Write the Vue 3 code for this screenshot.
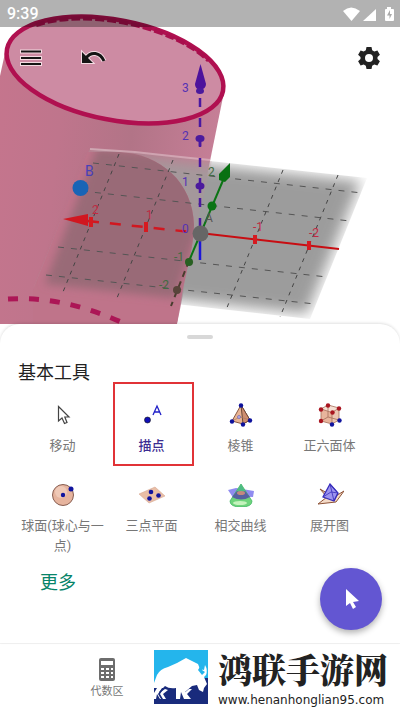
<script setup>
import { ref } from 'vue'

const tools = [
  { id: 'move', label: '移动' },
  { id: 'point', label: '描点' },
  { id: 'pyramid', label: '棱锥' },
  { id: 'cube', label: '正六面体' },
  { id: 'sphere', label: '球面(球心与一点)' },
  { id: 'plane', label: '三点平面' },
  { id: 'intersect', label: '相交曲线' },
  { id: 'net', label: '展开图' }
]
const selected = ref('point')
</script>

<template>
  <main class="app">
    <section class="view">
      <svg class="scene" viewBox="0 0 400 324" preserveAspectRatio="xMinYMin slice" aria-hidden="true">
        <defs>
          <linearGradient id="body" x1="0" y1="0" x2="1" y2="0.15">
            <stop offset="0" stop-color="#c5758d" />
            <stop offset="0.3" stop-color="#bf758c" />
            <stop offset="0.62" stop-color="#b27487" />
            <stop offset="1" stop-color="#c67f97" />
          </linearGradient>
          <filter id="soft" x="-10%" y="-10%" width="120%" height="120%">
            <feGaussianBlur stdDeviation="7" />
          </filter>
          <filter id="slight" x="-10%" y="-10%" width="120%" height="120%">
            <feGaussianBlur stdDeviation="4" />
          </filter>
          <clipPath id="sheetClip"><path d="M90 148L367 178L310 319L33 288Z" /></clipPath>
          <clipPath id="insideClip"><path d="M60 152H120C160 154 193 182 194 225C194 250 184 275 177 324H30V152Z" /></clipPath>
        </defs>
        <rect width="400" height="324" fill="#fff" />
        <path d="M0 76L5 53L224 92L177 324H0Z" fill="url(#body)" />
        <g clip-path="url(#sheetClip)">
          <path d="M92 152L361 181L307 314L40 284Z" fill="#9c9c9c" filter="url(#soft)" />
          <path d="M90 148L212 161L177 305L33 288Z" fill="#c98b9c" opacity="0.2" />
        </g>
        <g clip-path="url(#insideClip)">
          <path d="M90 146L220 160L177 324L33 324V290Z" fill="#bf748a" />
          <path d="M97 148L220 160L175 298L45 284Z" fill="#996a77" filter="url(#slight)" />
        </g>
        <path d="M90 149L135 152Q170 156 210 160" fill="none" stroke="#e0c2ca" stroke-width="2" opacity="0.6" />
        <g stroke="#555" stroke-width="1" stroke-dasharray="6 7" fill="none">
          <path d="M93 163L362 193" />
          <path d="M82 191L350 221" />
          <path d="M58 247L327 277" />
          <path d="M46 275L315 304" />
        </g>
        <g stroke="#444" stroke-width="1" stroke-dasharray="4 5" fill="none">
          <path d="M119 154L63 292" />
          <path d="M173 160L117 298" />
          <path d="M283 170L226 310" />
          <path d="M338 175L280 317" />
        </g>
        <g transform="translate(115 70) rotate(11)">
          <ellipse rx="110" ry="50" fill="#cd8ba3" stroke="#b01050" stroke-width="4.500" />
          <path d="M-86 -29A108 48 0 0 1 90 -27" fill="none" stroke="#a80f4d" stroke-width="4" stroke-dasharray="9 3" />
        </g>
        <path d="M8 299C45 297 80 304 121 322" fill="none" stroke="#ac1656" stroke-width="5" stroke-dasharray="10 11" />

        <path d="M88 221L200 233" stroke="#d11720" stroke-width="2.500" stroke-dasharray="11 11" />
        <path d="M200 233L339 249" stroke="#c80d12" stroke-width="2" />
        <path d="M63 219L88 214V226Z" fill="#d11720" />
        <path d="M91 217V227M146 222V232M255 235V244M309 241V250" stroke="#d61a20" stroke-width="4" />
        <path d="M200 98V230" stroke="#4a18a0" stroke-width="2.500" stroke-dasharray="9 11" />
        <path d="M200 139V146M200 186V193" stroke="#4a18a0" stroke-width="2.500" />
        <path d="M200.500 64L206 84Q206 89 200 90Q195 89 195 84Z" fill="#4d129c" />
        <g fill="#4b1a9d">
          <ellipse cx="200" cy="91" rx="4" ry="3" /><ellipse cx="200" cy="138.500" rx="4.500" ry="3.500" /><ellipse cx="200" cy="186" rx="4.500" ry="3.500" />
        </g>
        <path d="M200 236V260" stroke="#1c16d8" stroke-width="2.500" />
        <path d="M189 261L224 178" stroke="#0b7414" stroke-width="2" />
        <path d="M189 261L171 306" stroke="#493d2e" stroke-width="2" stroke-dasharray="6 5" />
        <path d="M230 163L219 174V180L225 182L230 177Z" fill="#087012" />
        <circle cx="212" cy="206" r="4.500" fill="#0b7414" />
        <circle cx="189" cy="262" r="4" fill="#286021" />
        <circle cx="177" cy="290" r="4" fill="#58443a" />
        <circle cx="200.500" cy="233.500" r="8" fill="#666" />
        <circle cx="80.500" cy="188" r="8" fill="#1864b6" />
        <g class="ticks">
          <g fill="#5532b4"><text x="182" y="92">3</text><text x="182" y="140">2</text><text x="182" y="186">1</text><text x="182" y="233">0</text></g>
          <g fill="#c02a43"><text x="92" y="214">2</text><text x="146" y="219">1</text><text x="253" y="231">-1</text><text x="309" y="237">-2</text></g>
          <g fill="#436b43"><text x="208" y="176">2</text><text x="174" y="261">-1</text><text x="159" y="289">-2</text></g>
          <text class="point-name" x="85" y="176" fill="#4840b8">B</text>
          <text x="205" y="222" fill="#555">A</text>
        </g>
      </svg>

      <div class="chrome">
        <header class="status">
          <span>9:39</span>
          <svg class="signals" viewBox="0 0 52 18" fill="#fff" aria-hidden="true">
            <path d="M1 6Q9 -1 18 6L9.500 16Z" />
            <path d="M34 4V16H21Z" />
            <path d="M45 2H49V4H51Q52 4 52 5V15Q52 16 51 16H44Q43 16 43 15V5Q43 4 44 4H45Z" />
            <path d="M48 5L45 10.500H47.500V14L50 9H48Z" fill="#aaa" />
          </svg>
        </header>
        <nav class="toolbar" aria-label="视图">
          <button class="icon-button" aria-label="菜单">
            <svg viewBox="0 0 24 24"><path d="M1 5.500H23M1 12H23M1 18H23" stroke="#f4dbe2" stroke-width="4" /><path d="M2 5.500H22M2 12H22M2 18H22" stroke="#151515" stroke-width="2" /></svg>
          </button>
          <button class="icon-button undo" aria-label="撤销">
            <svg viewBox="0 0 28 24"><g fill="none" stroke="#f4dbe2" stroke-width="5"><path d="M7 12C12 5 21 6 25 15" /><path d="M3 6V17H14Z" stroke-width="2" /></g><path d="M7 12C12 5 21 6 25 15" fill="none" stroke="#151515" stroke-width="3" /><path d="M3 6V17H14Z" fill="#151515" /></svg>
          </button>
          <button class="icon-button settings" aria-label="设置">
            <svg viewBox="0 0 24 24"><path fill="#222" fill-rule="evenodd" d="M9.500 1H14.500L15.200 4.200L17.300 5.400L20.400 4.400L22.900 8.700L20.500 10.900V13.100L22.900 15.300L20.400 19.600L17.300 18.600L15.200 19.800L14.500 23H9.500L8.800 19.800L6.700 18.600L3.600 19.600L1.100 15.300L3.500 13.100V10.900L1.100 8.700L3.600 4.400L6.700 5.400L8.800 4.200ZM12 8A4 4 0 1 0 12 16A4 4 0 1 0 12 8Z" /></svg>
          </button>
        </nav>
      </div>
    </section>

    <section class="sheet">
      <div class="handle"></div>
      <h1>基本工具</h1>
      <div class="tools">
        <button v-for="tool in tools" :key="tool.id" class="tool" :class="{ selected: selected === tool.id }" :aria-pressed="selected === tool.id" @click="selected = tool.id">
          <svg class="tool-icon" viewBox="0 0 28 24" fill="none" aria-hidden="true">
            <path v-if="tool.id === 'move'" d="M9.500 3.500V18L13 15L15.500 20.500L18 19.500L15.800 14H20Z" fill="#fff" stroke="#444" stroke-width="1.200" />
            <template v-else-if="tool.id === 'point'">
              <circle cx="9.500" cy="17" r="3" fill="#100fb8" stroke="#111" stroke-width="0.600" />
              <path d="M15 12L19 3L23 12M16.400 9H21.600" stroke="#2020c8" stroke-width="1.300" />
            </template>
            <template v-else-if="tool.id === 'pyramid'">
              <path d="M14 2L5 18L16 21L23 17Z" fill="#e9b493" stroke="#885640" />
              <path d="M14 2L16 21L23 17Z" fill="#cf8e70" stroke="#6d4838" />
              <path d="M5 18L13 14L23 17" stroke="#a87860" stroke-width="0.700" />
              <circle cx="12" cy="14" r="1.500" fill="#bbb3e8" stroke="#6b62b4" stroke-width="0.700" />
              <g fill="#0d119c"><circle cx="14" cy="2.500" r="2.200" /><circle cx="5" cy="18.500" r="2.200" /><circle cx="16" cy="21.500" r="2.200" /><circle cx="23" cy="17.500" r="2.200" /></g>
            </template>
            <template v-else-if="tool.id === 'cube'">
              <path d="M5 6L12 2L23 5V17L16 21L5 18Z" fill="#f6dfd3" />
              <path d="M5 6L16 9.500V21L5 18Z" fill="#e8b49c" />
              <path d="M16 9.500L23 5V17L16 21Z" fill="#ecc6b3" />
              <path d="M5 6L12 2L23 5L16 9.500ZM5 6V18L16 21V9.500M23 5V17L16 21M12 2V14L5 18M12 14L23 17" stroke="#a56e5a" stroke-width="0.800" />
              <g fill="#a91520"><circle cx="5" cy="6.500" r="2.200" /><circle cx="12" cy="2.500" r="2.200" /><circle cx="23" cy="5.500" r="2.200" /><circle cx="16.500" cy="9.500" r="2.200" /><circle cx="5" cy="18" r="2.200" /></g>
              <g fill="#10149e"><circle cx="16" cy="21.500" r="2.200" /><circle cx="23.500" cy="17.500" r="2.200" /></g>
            </template>
            <template v-else-if="tool.id === 'sphere'">
              <circle cx="14" cy="12" r="10.500" fill="#e6b49e" stroke="#875d50" />
              <circle cx="12" cy="9" r="6" fill="#f2d1c2" opacity="0.7" />
              <g fill="#10149e"><circle cx="14" cy="12" r="2.200" /><circle cx="22" cy="6" r="2.500" /></g>
            </template>
            <template v-else-if="tool.id === 'plane'">
              <path d="M1 11L17 4L27 13L11 20Z" fill="#e9bea6" stroke="#d7aa93" stroke-width="0.600" />
              <g fill="#10149e"><circle cx="13" cy="9" r="2.300" /><circle cx="20.500" cy="12.500" r="2.300" /><circle cx="11.500" cy="15.500" r="2.300" /></g>
            </template>
            <template v-else-if="tool.id === 'intersect'">
              <path d="M1 7L9 5L27 8L26 14L5 13Z" fill="#908cf0" />
              <path d="M14 1L3 18Q3 24 14 24Q25 24 25 18Z" fill="#6fd47c" stroke="#43b866" stroke-width="0.800" />
              <path d="M10 8L5 14Q14 19 23 14L18 8Z" fill="#5661a0" />
              <path d="M14 1L10 8Q14 10 18 8Z" fill="#4dbb84" />
              <ellipse cx="14" cy="10" rx="4" ry="2" fill="#c4887e" />
              <ellipse cx="13" cy="20" rx="7" ry="2" fill="#c5f3bd" />
            </template>
            <template v-else>
              <path d="M4 6L11 14L2 21L20 19L28 8L18 14Z" fill="#f4dac7" stroke="#8e5337" />
              <path d="M14 1L7 14L18 18L22 10Z" fill="#9d94ef" stroke="#372dbb" stroke-width="1.300" />
              <path d="M14 1L18 18L22 10ZM7 14L15 9L22 10" stroke="#372dbb" stroke-width="0.800" />
            </template>
          </svg>
          <span>{{ tool.label }}</span>
        </button>
      </div>
      <button class="more">更多</button>
      <button class="fab" aria-label="选择">
        <svg viewBox="0 0 24 24" fill="#fff"><path d="M7 2V19L11 16L14 22L17 20L14 15L20 14Z" /></svg>
      </button>
    </section>

    <footer class="bottom">
      <button class="tab">
        <svg viewBox="0 0 18 24"><rect x="1" width="16" height="23" rx="2" fill="#6d6d6d" /><path d="M3 3H15V7H3ZM3 10H6V12H3ZM8 10H11V12H8ZM13 10H15V12H13ZM3 14H6V16H3ZM8 14H11V16H8ZM13 14H15V16H13ZM3 18H6V20H3ZM8 18H11V20H8ZM13 18H15V20H13Z" fill="#fff" /></svg>
        <span>代数区</span>
      </button>
      <div class="brand">
        <svg class="logo" viewBox="0 0 54 54" aria-hidden="true">
          <rect width="54" height="54" fill="#24b5ec" />
          <path d="M0 34L12 28H54V54H0Z" fill="#192b7c" />
          <path d="M0 33L3 25Q6 19 14 17L23 13L32 8L44 14L46 19L50 20L51 15Q54 20 52 25L50 27L53 34L50 38L49 42L45 40L43 35L38 36L31 42L35 49H30L27 42L26 49H22V38Q15 39 11 36L5 42L10 49H6L3 44L2 49H0Z" fill="#fff" />
          <path d="M47 15L44 20L48 25L51 22L48 20L49 16Z" fill="#24b5ec" />
          <path d="M0 38H4L0 44ZM11 39L4 44L8 49H12L9 44L14 40ZM35 39L29 44L33 49H37L33 44L38 39Z" fill="#fff" />
          <path d="M0 38L3 38L0 43ZM4 44L8 38L10 38L6 44L9 49H7Z" fill="#192b7c" />
        </svg>
        <div class="brand-text">
          <strong>鸿联手游网</strong>
          <span>www.henanhonglian95.com</span>
        </div>
      </div>
    </footer>
  </main>
</template>

<style>
body { margin: 0; background: #fff; }
</style>

<style scoped>
.app {
  display: flex;
  flex-direction: column;
  min-height: 100vh;
  overflow: hidden;
  background: #fff;
  font-family: Roboto, "Noto Sans CJK SC", sans-serif;
}
button {
  padding: 0;
  border: 0;
  background: none;
  font-family: inherit;
  cursor: pointer;
}
svg { display: block; }
.view { display: grid; }
.scene, .chrome { grid-area: 1 / 1; }
.scene { width: 100%; }
.chrome { z-index: 1; }
.status {
  display: flex;
  align-items: center;
  justify-content: space-between;
  height: 27px;
  padding: 0 6px 0 7px;
  background: rgba(0, 0, 0, 0.3);
  color: #fff;
  font-size: 16px;
  font-weight: 500;
}
.signals { width: 52px; height: 18px; }
.toolbar {
  display: flex;
  align-items: center;
  gap: 36px;
  padding: 19px 19px 0;
}
.icon-button { width: 24px; height: 24px; }
.icon-button svg { width: 100%; height: 24px; }
.undo { width: 28px; }
.settings { margin-left: auto; }
.sheet {
  position: relative;
  z-index: 2;
  flex: 1;
  border-radius: 20px 20px 0 0;
  background: #fff;
  box-shadow: 0 -1px 3px rgba(0, 0, 0, 0.12);
}
.handle {
  width: 26px;
  height: 4px;
  margin: 11px auto 0;
  border-radius: 2px;
  background: #d8d8d8;
}
h1 {
  margin: 22px 0 0 18px;
  color: #222;
  font-size: 18px;
  font-weight: 400;
  line-height: 24px;
}
.tools {
  display: grid;
  grid-template-columns: repeat(4, 1fr);
  padding: 0 26px 0 18px;
}
.tool {
  position: relative;
  display: flex;
  flex-direction: column;
  align-items: center;
  gap: 9px;
  min-height: 80px;
  padding: 18px 2px 0;
  color: #777;
  font-size: 13px;
  line-height: 20px;
}
.tool-icon { width: 28px; height: 24px; }
.selected { color: #3c2c91; font-weight: 500; }
.selected::after {
  content: "";
  position: absolute;
  inset: -3px 2px -1px 6px;
  border: 2px solid #e13337;
}
.more {
  margin: 15px 0 0 40px;
  color: #078469;
  font-size: 18px;
  line-height: 24px;
}
.fab {
  position: absolute;
  right: 18px;
  bottom: 13px;
  display: grid;
  place-items: center;
  width: 62px;
  height: 62px;
  border-radius: 50%;
  background: #6356d2;
  box-shadow: 0 3px 6px rgba(0, 0, 0, 0.3);
}
.fab svg { width: 24px; height: 24px; }
.bottom {
  display: flex;
  align-items: flex-start;
  gap: 20px;
  height: 60px;
  padding: 6px 8px 0 80px;
  border-top: 1px solid #f3f3f3;
  background: #fff;
}
.tab {
  display: flex;
  flex-direction: column;
  align-items: center;
  gap: 2px;
  width: 54px;
  padding-top: 8px;
  color: #777;
  font-size: 11px;
  line-height: 16px;
}
.tab svg { width: 18px; height: 24px; }
.brand { display: flex; gap: 10px; }
.logo { width: 54px; height: 54px; }
.brand-text {
  display: flex;
  flex-direction: column;
  gap: 4px;
  color: #222;
  white-space: nowrap;
}
.brand-text strong {
  font-family: "Noto Serif CJK SC", "Noto Sans CJK SC", serif;
  font-size: 34px;
  font-weight: 900;
  line-height: 38px;
}
.brand-text span {
  font-family: "DejaVu Sans", sans-serif;
  font-size: 12px;
  line-height: 16px;
}
.ticks { font-family: Roboto, sans-serif; font-size: 12px; }
.point-name { font-size: 14px; }
</style>
